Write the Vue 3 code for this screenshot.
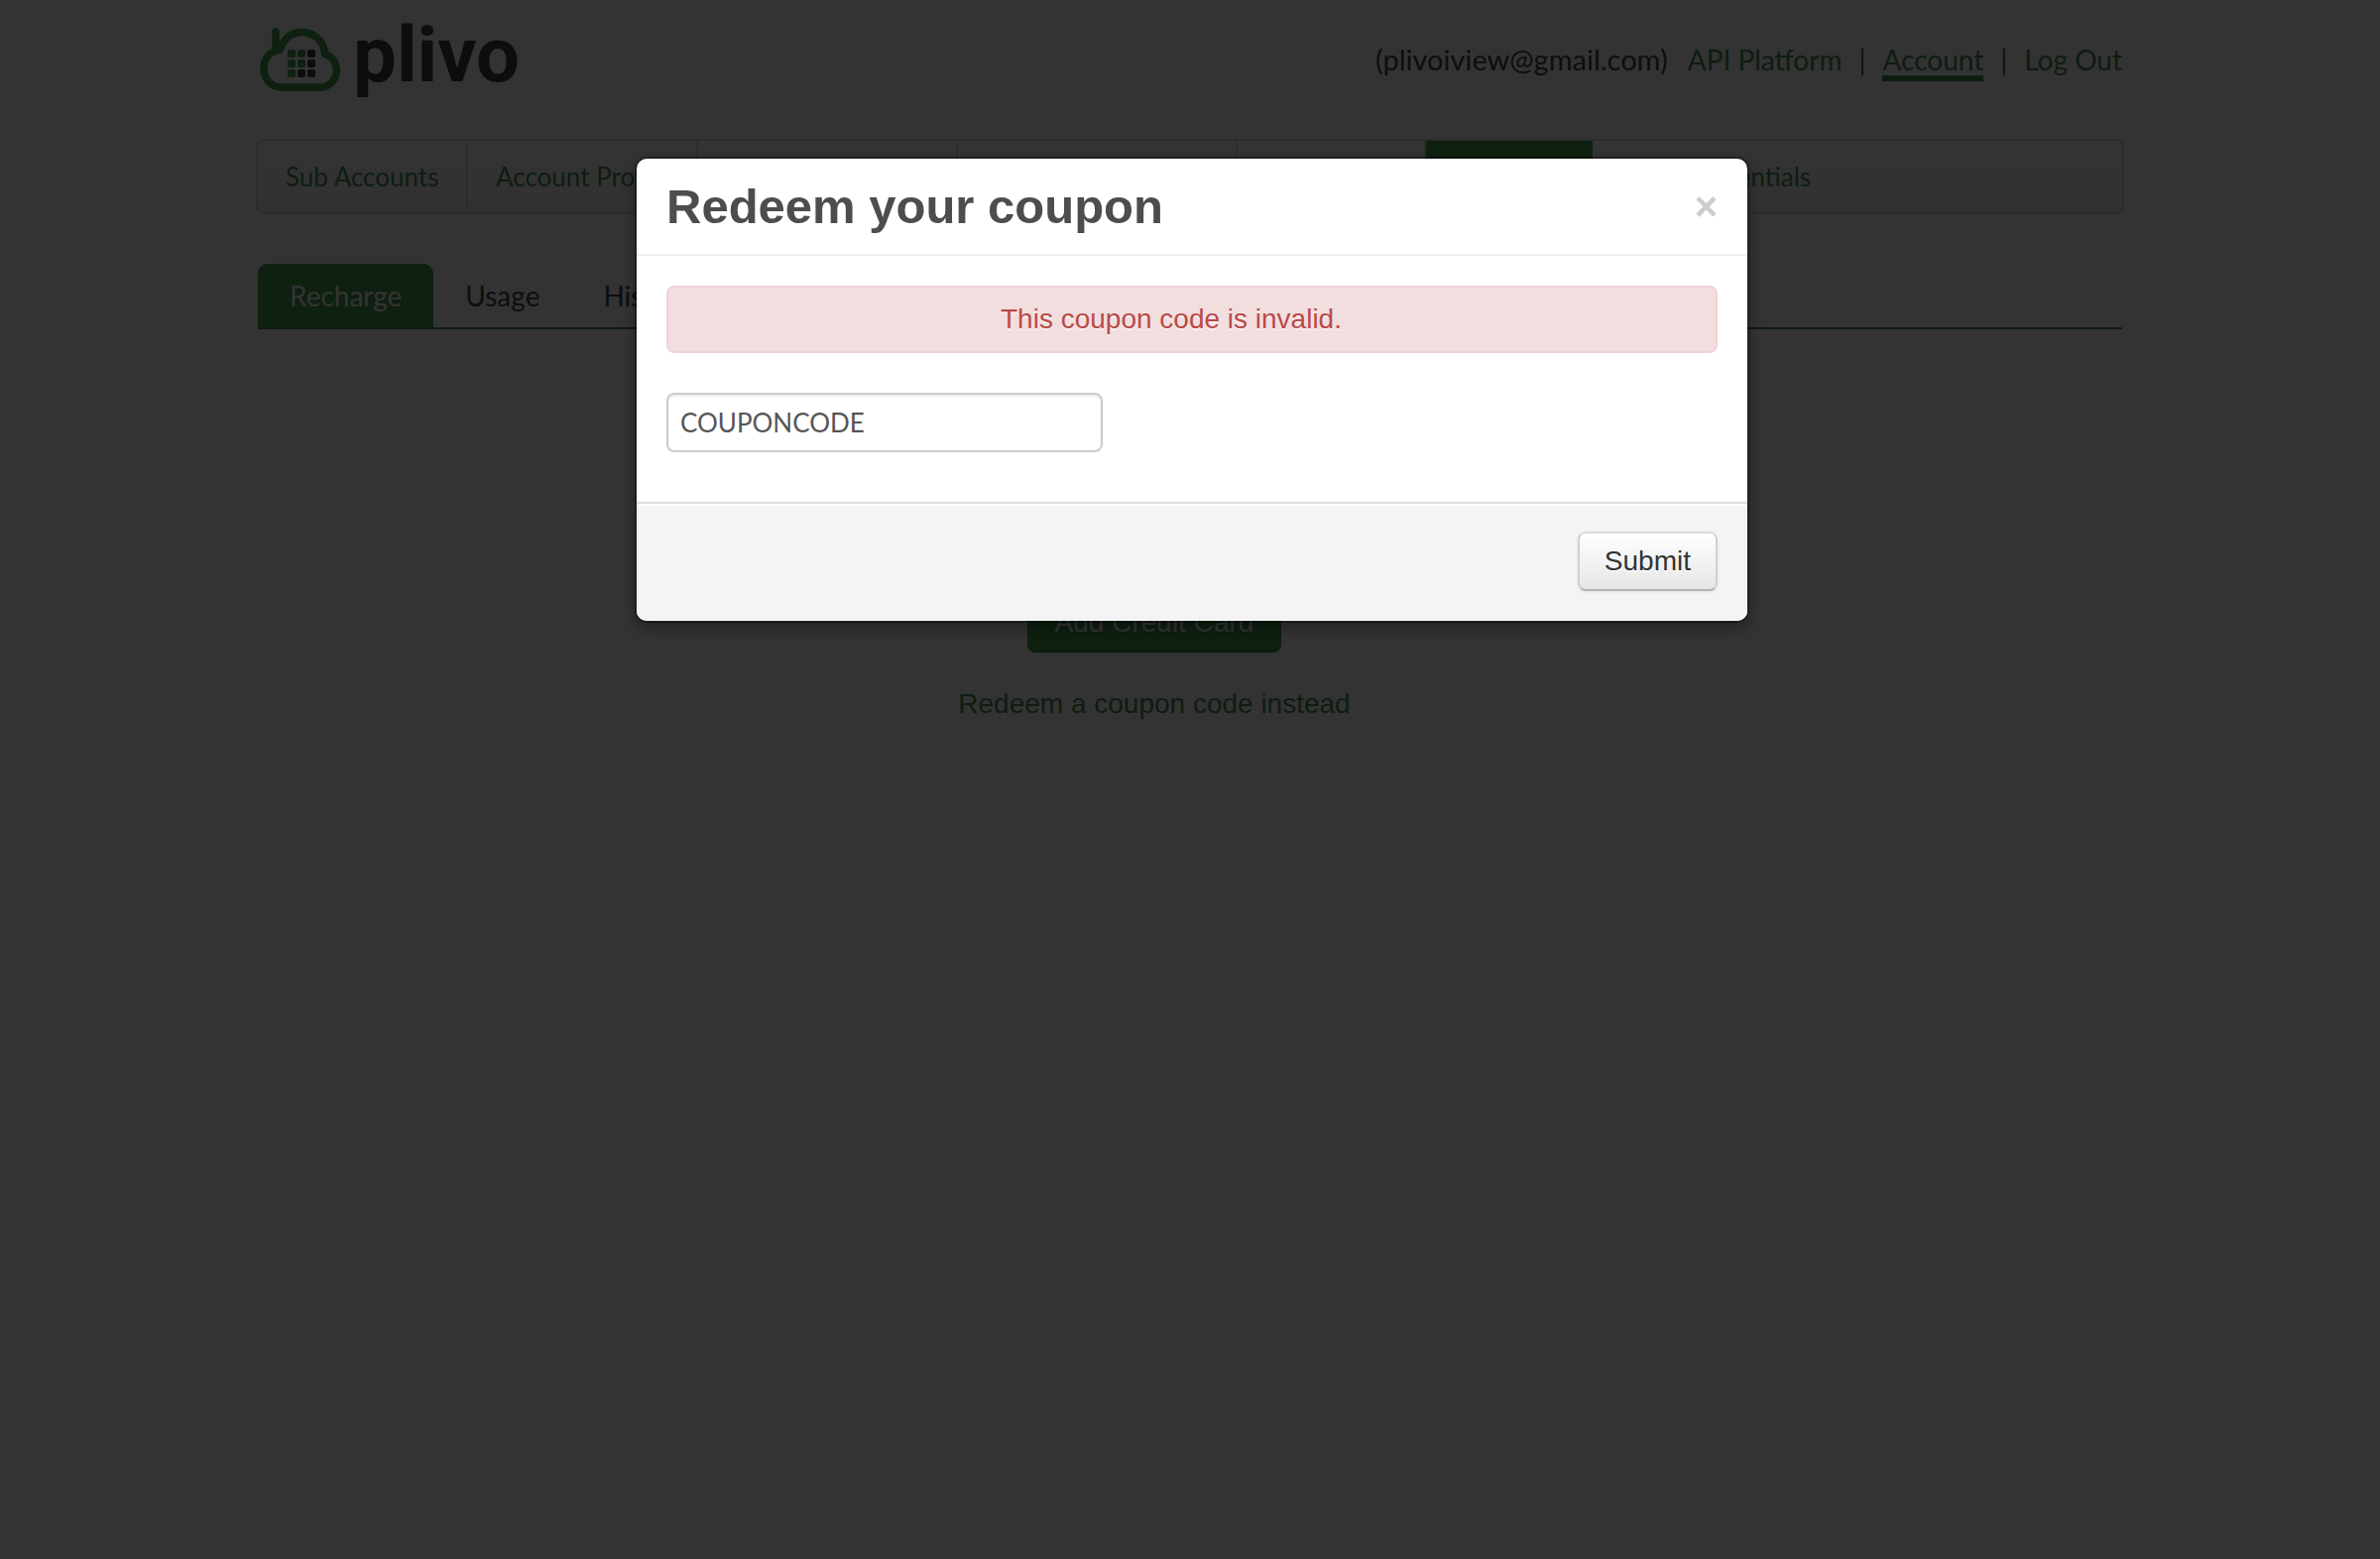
<script setup>
import { ref } from 'vue'

const coupon = ref('COUPONCODE')
const open = ref(true)

const sections = [
  { label: 'Sub Accounts', width: 212 },
  { label: 'Account Profile', width: 232 },
  { label: '', width: 262 },
  { label: '', width: 282 },
  { label: '', width: 190 },
  { label: '', width: 168, active: true },
  { label: 'API Credentials', width: 260 },
]
const tabs = ['Recharge', 'Usage', 'History']

const dots = []
for (let row = 0; row < 3; row++) {
  for (let col = 0; col < 3; col++) {
    dots.push({ x: 50 + col * 10, y: 50 + row * 10, dark: row + col > 2 || (row === 0 && col === 2) })
  }
}
</script>

<template>
  <div class="page">
    <div class="container">
      <header class="top">
        <a class="logo" href="#">
          <svg width="88" height="72" viewBox="20 22 88 72" aria-hidden="true">
            <path
              d="M38 32V51C31 53 26 61 26 69C26 80 34 88 44 88H83C92 88 99.500 80 99.500 71C99.500 63 95 57 87.500 54.500C87 41 76.500 32.500 64.500 32.500C53.500 32.500 46 39 42.500 50L38 51.500"
              fill="none" stroke="#46a050" stroke-width="7.500" stroke-linejoin="round" stroke-linecap="round"
            />
            <rect v-for="(d, i) in dots" :key="i" :x="d.x" :y="d.y" width="8" height="8" rx="2" :fill="d.dark ? '#3c3c3c' : '#46a050'" />
          </svg>
          <span class="word">plivo</span>
        </a>
        <nav class="links">
          <span class="mail">(plivoiview@gmail.com)</span>
          <a href="#">API Platform</a>
          <span class="bar">|</span>
          <a href="#" class="current">Account</a>
          <span class="bar">|</span>
          <a href="#">Log Out</a>
        </nav>
      </header>

      <nav class="sections">
        <a v-for="(s, i) in sections" :key="i" href="#" :class="{ active: s.active }" :style="{ width: s.width + 'px' }">{{ s.label }}</a>
      </nav>

      <nav class="tabs">
        <a v-for="(t, i) in tabs" :key="t" href="#" :class="{ active: i === 0 }">{{ t }}</a>
      </nav>

      <main class="content">
        <button type="button" class="add">Add Credit Card</button>
        <a href="#" class="redeem" @click.prevent="open = true">Redeem a coupon code instead</a>
      </main>
    </div>

    <template v-if="open">
      <div class="backdrop"></div>
      <form class="modal" role="dialog" aria-labelledby="modal-title" @submit.prevent>
        <div class="modal-header">
          <h3 id="modal-title">Redeem your coupon</h3>
          <button type="button" class="close" aria-label="Close" @click="open = false">×</button>
        </div>
        <div class="modal-body">
          <div class="alert" role="alert">This coupon code is invalid.</div>
          <input v-model="coupon" type="text" aria-label="Coupon code" />
        </div>
        <div class="modal-footer">
          <button type="submit" class="submit">Submit</button>
        </div>
      </form>
    </template>
  </div>
</template>

<style>
body {
  background: #fff;
}
</style>

<style scoped>
.page {
  position: relative;
  min-height: 100vh;
  overflow: hidden;
  font: 28px/40px "Liberation Sans", Arial, sans-serif;
  color: #4d4d4d;
}
.page *,
.page {
  box-sizing: border-box;
}
a {
  color: #469155;
  text-decoration: none;
}
.container {
  max-width: 1884px;
  margin: 0 auto;
}
.top,
.links,
.logo,
.sections,
.tabs {
  display: flex;
}
.top {
  justify-content: space-between;
  height: 140px;
  padding: 0 2px;
}
.logo {
  align-items: flex-start;
  height: 120px;
  padding-top: 22px;
}
.word {
  margin: -6px 0 0 8px;
  font: bold 78px/80px Roboto, sans-serif;
  color: #414141;
}
.links {
  padding-top: 40px;
  font-family: Lato, sans-serif;
  align-items: flex-start;
}
.mail {
  margin-right: 20px;
  color: #464646;
  font-size: 29px;
}
.bar {
  margin: 0 17px;
  color: #555;
}
.current {
  height: 42px;
  border-bottom: 6px solid #469155;
}
.sections {
  height: 76px;
  border: 2px solid #dcdcdc;
  border-radius: 8px;
  background: linear-gradient(#fff, #f5f5f5);
  font: 26px/72px Lato, sans-serif;
  overflow: hidden;
}
.sections a {
  flex: none;
  padding-left: 28px;
  border-right: 2px solid #dcdcdc;
  white-space: nowrap;
}
.sections a.active {
  background: #46a050;
  border-right: 0;
}
.sections a:last-child {
  padding-left: 44px;
  border-right: 0;
}
.tabs {
  margin: 50px 2px 0;
  border-bottom: 2px solid #469155;
  font: 28px/64px Lato, sans-serif;
}
.tabs a {
  padding: 0 32px;
  color: #464646;
}
.tabs a.active {
  border-radius: 10px 10px 0 0;
  background: #46a050;
  color: #fff;
}
.content {
  display: flex;
  flex-direction: column;
  align-items: center;
  gap: 32px;
  padding: 266px 72px 0 0;
}
.add {
  height: 60px;
  padding: 0 28px;
  border: 0;
  border-radius: 8px;
  background: #46a050;
  box-shadow: inset 0 -2px 2px rgba(0, 0, 0, 0.2);
  color: #fff;
  font: inherit;
}
.backdrop {
  position: absolute;
  inset: 0;
  background: rgba(0, 0, 0, 0.8);
}
.modal {
  position: absolute;
  top: 158px;
  left: 50%;
  width: 1124px;
  margin-left: -560px;
  border: 2px solid rgba(0, 0, 0, 0.3);
  border-radius: 12px;
  background: #fff;
  background-clip: padding-box;
  box-shadow: 0 6px 14px rgba(0, 0, 0, 0.3);
}
.modal-header {
  display: flex;
  justify-content: space-between;
  padding: 18px 30px;
  border-bottom: 2px solid #eee;
}
h3 {
  margin: 0;
  font-size: 49px;
  line-height: 60px;
}
.close {
  height: 40px;
  margin-top: 10px;
  padding: 0;
  border: 0;
  background: none;
  color: #ccc;
  font: bold 40px/40px "Liberation Sans", Arial, sans-serif;
}
.modal-body {
  padding: 30px 30px 50px;
}
.alert {
  padding: 12px 70px 12px 28px;
  border: 2px solid #eed3d7;
  border-radius: 8px;
  background: #f2dede;
  color: #b94a48;
  text-align: center;
  text-shadow: 0 2px 0 rgba(255, 255, 255, 0.5);
}
input {
  display: block;
  width: 440px;
  height: 60px;
  margin-top: 40px;
  padding: 0 12px;
  border: 2px solid #ccc;
  border-radius: 8px;
  background: #fff;
  box-shadow: inset 0 2px 2px rgba(0, 0, 0, 0.08);
  color: #555;
  font: 26px/40px Lato, sans-serif;
}
.modal-footer {
  display: flex;
  justify-content: flex-end;
  padding: 28px 30px 30px;
  border-top: 2px solid #ddd;
  border-radius: 0 0 10px 10px;
  background: #f4f4f4;
  box-shadow: inset 0 2px 0 #fff;
}
.submit {
  height: 60px;
  padding: 0 25px;
  border: 2px solid;
  border-color: #dcdcdc #d0d0d0 #b3b3b3;
  border-radius: 8px;
  background: linear-gradient(#fff, #e6e6e6);
  box-shadow: 0 2px 4px rgba(0, 0, 0, 0.05);
  color: #333;
  font: inherit;
  text-shadow: 0 2px 2px rgba(255, 255, 255, 0.75);
}
</style>
